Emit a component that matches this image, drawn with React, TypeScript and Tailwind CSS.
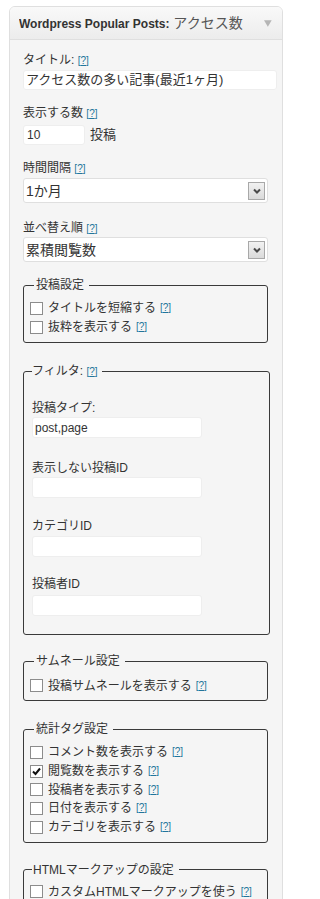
import type { ReactNode } from "react";

const Help = ({ gap }: { gap?: boolean }) => (
  <span className={(gap ? "ml-[4px] " : "") + "text-[10px] leading-none text-[#21759b]"}>
    [<span className="underline">?</span>]
  </span>
);

const Check = ({ checked }: { checked?: boolean }) => (
  <span className="w-[13px] h-[13px] shrink-0 border border-[#8c8c8c] bg-white flex items-center justify-center">
    {checked && (
      <svg width="9" height="9" viewBox="0 0 9 9">
        <path d="M1 4.5 L3.5 7 L8 1.5" fill="none" stroke="#111" strokeWidth="2" />
      </svg>
    )}
  </span>
);

const Row = ({ label, checked }: { label: string; checked?: boolean }) => (
  <div className="flex items-center h-[18.7px]">
    <Check checked={checked} />
    <span className="ml-[5px] leading-[16px]">{label}</span>
    <Help gap />
  </div>
);

const Box = ({
  legend,
  children,
  className,
  legendClass,
}: {
  legend: ReactNode;
  children: ReactNode;
  className: string;
  legendClass?: string;
}) => (
  <fieldset className={"border border-[#3a3a3a] rounded-[3px] " + className}>
    <legend className={"leading-[16px] " + (legendClass ?? "ml-[4px] pl-[2px] pr-[5px]")}>{legend}</legend>
    {children}
  </fieldset>
);

const Select = ({ value, className }: { value: string; className: string }) => (
  <div className={"w-[245px] h-[25px] bg-white border border-[#dfdfdf] rounded-[3px] flex items-center justify-between pl-[2px] pr-[2px] " + className}>
    <span className="text-[14px] leading-[16px]">{value}</span>
    <span className="w-[17px] h-[18px] border border-[#a8a8a8] bg-gradient-to-b from-[#f2f2f2] to-[#dadada] flex items-center justify-center">
      <svg width="8" height="6" viewBox="0 0 8 6">
        <path d="M1 1.5 L4 4.5 L7 1.5" fill="none" stroke="#4a4a4a" strokeWidth="2" />
      </svg>
    </span>
  </div>
);

const Field = ({ value, className }: { value?: string; className: string }) => (
  <div className={"w-[170px] h-[21px] bg-white border border-[#eeeeee] rounded-[3px] flex items-center pl-[2px] text-[12px] " + className}>
    {value}
  </div>
);

export default function App() {
  return (
    <div
      className="min-h-[899px] bg-white pt-[6px] pl-[9px] text-[12px] text-[#333] overflow-hidden"
      style={{ fontFamily: '"Liberation Sans", "Noto Sans CJK JP", sans-serif' }}
    >
      <div className="w-[274px] border border-[#dfdfdf] rounded-t-[6px] overflow-hidden">
        <div className="h-[33px] border-b border-[#dfdfdf] bg-gradient-to-b from-[#f9f9f9] to-[#ececec] flex items-center pl-[9px] pr-[10px]">
          <div className="w-[242px] whitespace-nowrap overflow-hidden leading-[16px]">
            <span className="font-bold text-[12px] text-[#333]">Wordpress Popular Posts:</span>
            <span className="text-[14px] text-[#555]"> アクセス数</span>
          </div>
          <svg className="ml-[13px]" width="8" height="7" viewBox="0 0 8 7">
            <path d="M0 0 H8 L4 7 Z" fill="#b5b5b5" />
          </svg>
        </div>

        <div className="bg-[#f5f5f5] pl-[13px] pt-[12px] pb-[20px]">
          <div className="leading-[16px]">
            タイトル: <Help />
          </div>
          <div className="mt-[2px] w-[254px] h-[20px] bg-white border border-[#eeeeee] rounded-[3px] flex items-center pl-[2px] text-[13px] leading-[16px]">
            アクセス数の多い記事(最近1ヶ月)
          </div>

          <div className="mt-[15px] leading-[16px]">
            表示する数 <Help />
          </div>
          <div className="mt-[4px] flex items-center">
            <div className="w-[62px] h-[20px] bg-white border border-[#eeeeee] rounded-[3px] flex items-center pl-[3px] text-[12px]">
              10
            </div>
            <span className="ml-[5px] text-[13px]">投稿</span>
          </div>

          <div className="mt-[15px] leading-[16px]">
            時間間隔 <Help />
          </div>
          <Select value="1か月" className="mt-[2px]" />

          <div className="mt-[17px] leading-[16px]">
            並べ替え順 <Help />
          </div>
          <Select value="累積閲覧数" className="mt-[1px]" />

          <Box legend="投稿設定" className="mt-[15px] w-[245px] px-[6px] pt-[6px] pb-[6px]">
            <Row label="タイトルを短縮する" />
            <Row label="抜粋を表示する" />
          </Box>

          <Box
            legend={
              <>
                フィルタ: <Help />
              </>
            }
            legendClass="ml-[0px] pr-[4px]"
            className="mt-[20px] w-[247px] pl-[8px] pt-[21px] pb-[18px]"
          >
            <div className="leading-[16px]">投稿タイプ:</div>
            <Field value="post,page" className="mt-[1px]" />
            <div className="mt-[22px] leading-[16px]">表示しない投稿ID</div>
            <Field className="mt-[1px]" />
            <div className="mt-[20px] leading-[16px]">カテゴリID</div>
            <Field className="mt-[2px]" />
            <div className="mt-[19px] leading-[16px]">投稿者ID</div>
            <Field className="mt-[3px]" />
          </Box>

          <Box legend="サムネール設定" className="mt-[18px] w-[245px] px-[6px] pt-[7px] pb-[5px]">
            <Row label="投稿サムネールを表示する" />
          </Box>

          <Box legend="統計タグ設定" className="mt-[20px] w-[245px] px-[6px] pt-[6px] pb-[5px]">
            <Row label="コメント数を表示する" />
            <Row label="閲覧数を表示する" checked />
            <Row label="投稿者を表示する" />
            <Row label="日付を表示する" />
            <Row label="カテゴリを表示する" />
          </Box>

          <Box legend="HTMLマークアップの設定" legendClass="ml-[2px] pl-[1px] pr-[5px]" className="mt-[19px] w-[245px] px-[6px] pt-[5px] pb-[6px]">
            <Row label="カスタムHTMLマークアップを使う" />
          </Box>
        </div>
      </div>
    </div>
  );
}
